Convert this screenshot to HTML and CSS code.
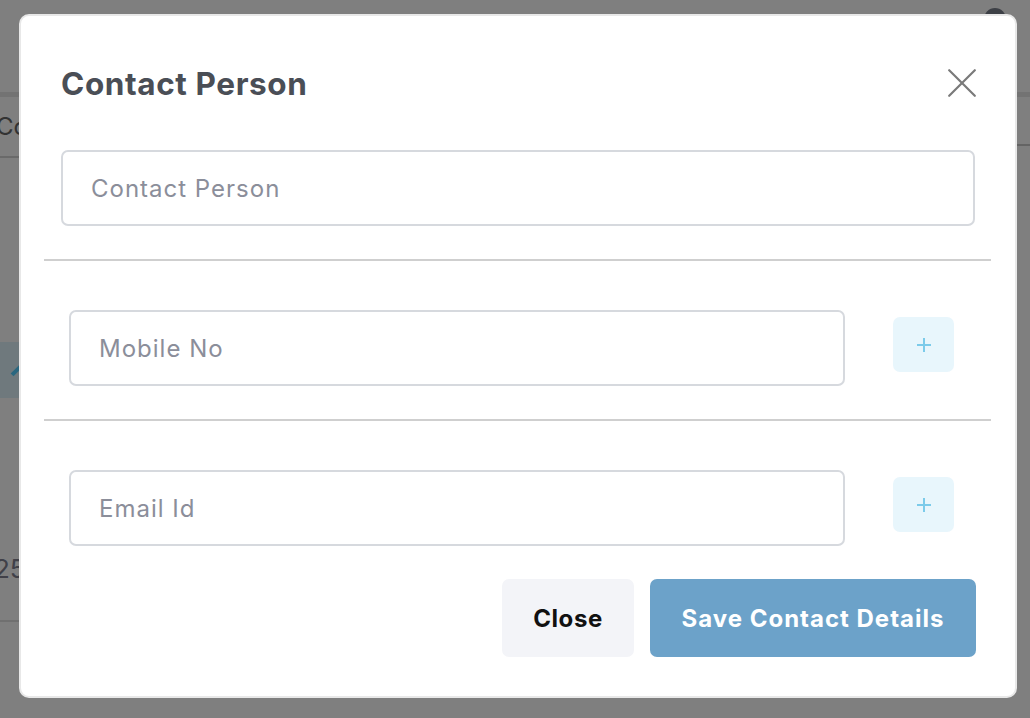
FILE: index.html
```html
<!DOCTYPE html>
<html lang="en">
<head>
<meta charset="utf-8">
<title>Contact Person</title>
<link rel="stylesheet" href="styles.css">
</head>
<body>
<div class="page">
  <header class="page-header">
    <span class="avatar"></span>
  </header>
  <div class="tabs">
    <div class="tab-left"><span class="tab">Contacts</span></div>
    <div class="tab-right"></div>
  </div>
  <div class="page-body">
    <div class="tool-row"><span class="pencil"></span></div>
    <div class="data-row"><span class="num">25</span></div>
  </div>
</div>

<div class="overlay">
  <div class="modal" role="dialog" aria-labelledby="modal-title">
    <div class="modal-header">
      <h2 id="modal-title" class="modal-title">Contact Person</h2>
      <button class="icon-close" aria-label="Close">
        <svg width="28" height="28" viewBox="0 0 28 28"><path d="M1.2 1.2 L26.8 26.8 M26.8 1.2 L1.2 26.8" stroke="#7a7a7a" stroke-width="2.2" stroke-linecap="round" fill="none"/></svg>
      </button>
    </div>
    <div class="modal-body">
      <div class="section section-first">
        <input class="field field-wide" type="text" placeholder="Contact Person">
      </div>
      <hr class="divider">
      <div class="section row">
        <input class="field field-row" type="text" placeholder="Mobile No">
        <button class="add-btn" aria-label="Add mobile">
          <svg width="16" height="16" viewBox="0 0 16 16"><path d="M8 1 V15 M1 8 H15" stroke="#7ccbea" stroke-width="2" fill="none"/></svg>
        </button>
      </div>
      <hr class="divider">
      <div class="section row">
        <input class="field field-row" type="text" placeholder="Email Id">
        <button class="add-btn" aria-label="Add email">
          <svg width="16" height="16" viewBox="0 0 16 16"><path d="M8 1 V15 M1 8 H15" stroke="#7ccbea" stroke-width="2" fill="none"/></svg>
        </button>
      </div>
      <div class="actions">
        <button class="btn btn-secondary">Close</button>
        <button class="btn btn-primary">Save Contact Details</button>
      </div>
    </div>
  </div>
</div>
</body>
</html>
```

FILE: styles.css
```css
* { box-sizing: border-box; }
html, body { margin: 0; padding: 0; }
body {
  width: 1030px;
  height: 718px;
  overflow: hidden;
  font-family: Inter, Roboto, "Liberation Sans", sans-serif;
  background: #ffffff;
}

/* background page */
.page { width: 1030px; height: 718px; }
.page-header {
  height: 97px;
  border-bottom: 5px solid #e6e6e6;
  display: flex;
  justify-content: flex-end;
  padding-right: 24px;
}
.avatar {
  width: 22px; height: 22px;
  margin-top: 8px;
  border-radius: 50%;
  background: #7b808c;
}
.tabs {
  display: flex;
  align-items: flex-start;
}
.tab-left {
  flex: 1;
  height: 61px;
  border-bottom: 2px solid #d4d4d4;
  display: flex;
  align-items: center;
}
.tab-right {
  width: 300px;
  height: 49px;
  border-bottom: 2px solid #c8c8c8;
}
.tab { font-size: 24px; color: #666; margin-left: -4px; }
.page-body { padding-top: 184px; }
.tool-row {
  width: 320px;
  height: 56px;
  background: #dff3fa;
  display: flex;
  align-items: center;
  padding-left: 8px;
}
.pencil {
  width: 14px; height: 4px;
  background: #55cfff;
  transform: rotate(-45deg);
  margin-left: 2px;
}
.data-row {
  width: 420px;
  margin-top: 150px;
  height: 74px;
  padding-bottom: 32px;
  border-bottom: 2px solid #e0e0e0;
  display: flex;
  align-items: center;
}
.num { font-size: 26px; color: #808090; margin-left: -6px; }

/* overlay */
.overlay {
  position: fixed;
  inset: 0;
  background: rgba(0, 0, 0, 0.5);
  padding: 14px 13px 20px 19px;
}
.modal {
  width: 998px;
  height: 684px;
  background: #ffffff;
  border: 2px solid #e8e8e8;
  border-radius: 10px;
  display: flex;
  flex-direction: column;
}
.modal-header {
  display: flex;
  justify-content: space-between;
  align-items: flex-start;
  padding: 50px 39px 0 40px;
  height: 134px;
}
.modal-title {
  margin: 0;
  font-size: 31.5px;
  font-weight: 700;
  letter-spacing: 0.6px;
  color: #4a4e56;
  line-height: 36px;
}
.icon-close {
  border: 0;
  background: transparent;
  padding: 0;
  width: 28px; height: 28px;
  margin-top: 3px;
  cursor: pointer;
}
.icon-close svg { display: block; }

.modal-body { padding: 0 24px 0 23px; }
.section-first { padding: 0 17px; }
.field {
  height: 76px;
  border: 2px solid #d6d9de;
  border-radius: 7px;
  padding: 0 28px;
  font-family: inherit;
  font-size: 24px;
  letter-spacing: 1px;
  color: #333;
  background: #fff;
  outline: none;
}
.field::placeholder { color: #8b8e9a; }
.field-wide { width: 914px; display: block; }
.divider {
  margin: 33px 0 0 0;
  border: 0;
  border-top: 2px solid #cfcfcf;
  height: 0;
}
.row {
  display: flex;
  align-items: flex-start;
  padding-left: 25px;
  margin-top: 49px;
}
.field-row { width: 776px; }
.add-btn {
  width: 61px;
  height: 55px;
  margin-left: 48px;
  margin-top: 7px;
  border: 0;
  border-radius: 7px;
  background: #e8f6fc;
  display: flex;
  align-items: center;
  justify-content: center;
  padding: 0;
}
.actions {
  display: flex;
  justify-content: flex-end;
  gap: 16px;
  margin-top: 33px;
  padding-right: 15px;
}
.btn {
  height: 78px;
  border: 0;
  border-radius: 7px;
  font-family: inherit;
  font-size: 24px;
  font-weight: 700;
  padding: 0;
}
.btn-secondary { width: 132px; background: #f3f4f8; color: #111; letter-spacing: 0.6px; }
.btn-primary { width: 326px; background: #6ca2c9; color: #ffffff; letter-spacing: 1px; }
```
